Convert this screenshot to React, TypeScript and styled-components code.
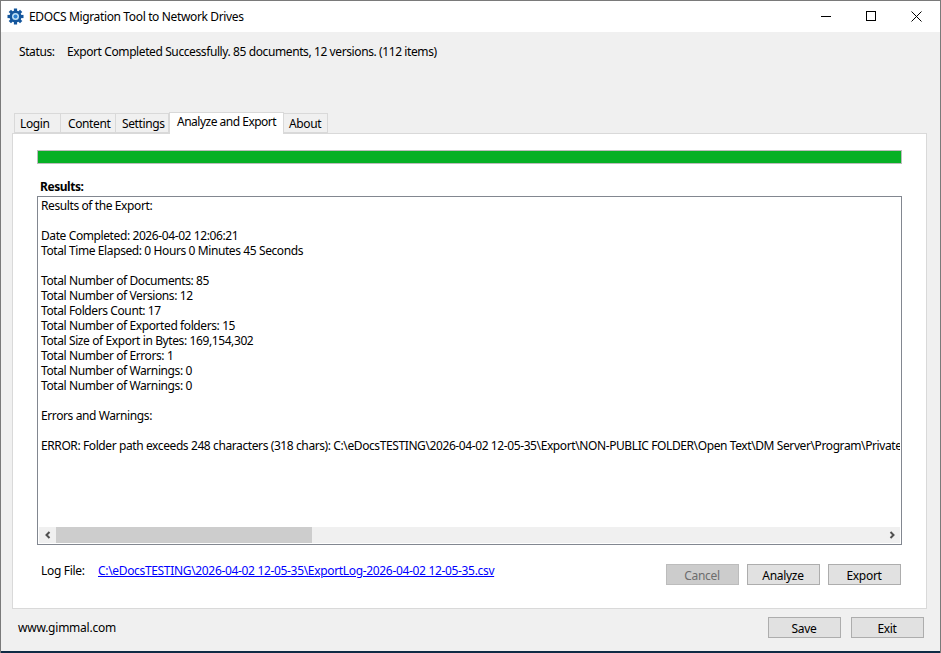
import styled, { createGlobalStyle } from "styled-components";

const GlobalStyle = createGlobalStyle`
    html, body { margin: 0; padding: 0; background: #f0f0f0; }
    body { font-family: "Noto Sans", "Open Sans", sans-serif; font-size: 12px; color: #000; }
`

const Window = styled.div`
    width: 941px;
    height: 653px;
    box-sizing: border-box;
    border: 1px solid #7a7a7a;
    border-bottom: none;
    background: #f0f0f0;
    display: flex;
    flex-direction: column;
    overflow: hidden;
`

const TitleBar = styled.div`
    height: 31px;
    background: white;
    display: flex;
    align-items: center;
    padding: 0 1px 0 6px;
    flex: none;
`
const AppTitle = styled.span`
    margin-left: 5px;
    flex: 1;
    letter-spacing: -0.36px;
`
const WinButton = styled.div`
    width: 45px;
    height: 31px;
    display: flex;
    align-items: center;
    justify-content: center;
`

const StatusRow = styled.div`
    height: 38px;
    padding-left: 18px;
    display: flex;
    align-items: center;
    letter-spacing: -0.4px;
    flex: none;
`
const StatusLabel = styled.span`width: 48px;`

const Tabs = styled.div`
    margin-top: 41px;
    height: 22px;
    padding-left: 13px;
    display: flex;
    align-items: flex-end;
    flex: none;
    position: relative;
    z-index: 1;
`
const Tab = styled.div<{ $w: number; $pad: number; $active?: boolean }>`
    width: ${p => p.$w}px;
    height: ${p => (p.$active ? 22 : 20)}px;
    box-sizing: border-box;
    border: 1px solid #d9d9d9;
    border-left: ${p => (p.$active ? "1px solid #d9d9d9" : "none")};
    border-bottom: ${p => (p.$active ? "none" : "1px solid #d9d9d9")};
    background: ${p => (p.$active ? "white" : "#f0f0f0")};
    padding: ${p => (p.$active ? 1 : 2)}px 0 0 ${p => p.$pad}px;
    margin-bottom: ${p => (p.$active ? -1 : 0)}px;
    letter-spacing: ${p => (p.$active ? -0.5 : -0.38)}px;
    line-height: 16px;
    white-space: nowrap;
    &:first-child { border-left: 1px solid #d9d9d9; }
`

const Panel = styled.div`
    margin-left: 11px;
    width: 915px;
    height: 476px;
    box-sizing: border-box;
    border: 1px solid #d9d9d9;
    background: white;
    padding: 16px 24px 0 24px;
    display: flex;
    flex-direction: column;
    flex: none;
`

const ProgressTrack = styled.div`
    height: 14px;
    box-sizing: border-box;
    border: 1px solid #bcbcbc;
    background: #06b025;
    flex: none;
`
const ResultsLabel = styled.div`
    margin-top: 15px;
    margin-left: 3px;
    height: 17px;
    line-height: 16px;
    font-weight: 700;
    letter-spacing: -0.45px;
`

const ResultsBox = styled.div`
    height: 349px;
    box-sizing: border-box;
    border: 1px solid #828790;
    padding: 1px;
    display: flex;
    flex-direction: column;
    flex: none;
`
const ResultsText = styled.div`
    flex: 1;
    padding: 0 0 0 2px;
    overflow: hidden;
    white-space: pre;
    line-height: 15px;
    letter-spacing: -0.4px;
`
const ScrollBar = styled.div`
    height: 16px;
    background: #f0f0f0;
    display: flex;
    align-items: stretch;
    flex: none;
`
const ScrollArrow = styled.div`
    width: 17px;
    display: flex;
    align-items: center;
    justify-content: center;
    flex: none;
`
const ScrollThumb = styled.div`
    width: 256px;
    background: #cdcdcd;
    flex: none;
`
const ScrollRest = styled.div`flex: 1;`

const LogRow = styled.div`
    margin-top: 19px;
    display: flex;
    align-items: flex-start;
    height: 22px;
    flex: none;
`
const LogLabel = styled.span`
    margin-left: 4px;
    width: 57px;
    line-height: 14px;
    letter-spacing: -0.3px;
`
const LogLink = styled.a`
    flex: 1;
    color: #0000ff;
    text-decoration: underline;
    line-height: 14px;
    letter-spacing: -0.33px;
`
const ButtonGroup = styled.div`
    display: flex;
    gap: 8px;
    margin-right: 1px;
    flex: none;
`
const Button = styled.button<{ $disabled?: boolean }>`
    width: 73px;
    height: 21px;
    box-sizing: border-box;
    padding: 1px 1px 0 0;
    font: inherit;
    letter-spacing: -0.3px;
    border: 1px solid ${p => (p.$disabled ? "#bcbcbc" : "#adadad")};
    background: ${p => (p.$disabled ? "#cccccc" : "#e1e1e1")};
    color: ${p => (p.$disabled ? "#6d6d6d" : "#000")};
`

const Footer = styled.div`
    display: flex;
    align-items: center;
    padding: 8px 16px 0 17px;
    height: 21px;
    flex: none;
`
const Website = styled.span`
    flex: 1;
    letter-spacing: -0.23px;
`
const FooterButtons = styled.div`
    display: flex;
    gap: 10px;
`
const TaskbarEdge = styled.div`
    margin-top: auto;
    height: 2px;
    margin-left: -1px;
    margin-right: -1px;
    background: #0f2b45;
    flex: none;
`

const GearIcon = () => (
    <svg width="17" height="17" viewBox="0 0 17 17">
        <g fill="#14569c">
            {[0, 45, 90, 135, 180, 225, 270, 315].map(a => (
                <rect key={a} x="6.9" y="0.5" width="3.2" height="4" transform={`rotate(${a} 8.5 8.5)`} />
            ))}
        </g>
        <circle cx="8.5" cy="8.5" r="6" fill="#14569c" />
        <circle cx="8.5" cy="8.5" r="3.5" fill="#bfe0f5" />
        <circle cx="8.5" cy="8.5" r="2" fill="#2b7fd0" />
    </svg>
)

const results = `Results of the Export:

Date Completed: 2026-04-02 12:06:21
Total Time Elapsed: 0 Hours 0 Minutes 45 Seconds

Total Number of Documents: 85
Total Number of Versions: 12
Total Folders Count: 17
Total Number of Exported folders: 15
Total Size of Export in Bytes: 169,154,302
Total Number of Errors: 1
Total Number of Warnings: 0
Total Number of Warnings: 0

Errors and Warnings:

ERROR: Folder path exceeds 248 characters (318 chars): C:\\eDocsTESTING\\2026-04-02 12-05-35\\Export\\NON-PUBLIC FOLDER\\Open Text\\DM Server\\Program\\Private\\Templates`

const App = () => {
    return (
        <Window>
            <GlobalStyle />
            <TitleBar>
                <GearIcon />
                <AppTitle>EDOCS Migration Tool to Network Drives</AppTitle>
                <WinButton>
                    <svg width="11" height="11" viewBox="0 0 11 11"><path d="M0 5.5H10" stroke="#000" /></svg>
                </WinButton>
                <WinButton>
                    <svg width="11" height="11" viewBox="0 0 11 11"><rect x="0.5" y="0.5" width="9" height="9" fill="none" stroke="#000" /></svg>
                </WinButton>
                <WinButton>
                    <svg width="11" height="11" viewBox="0 0 11 11"><path d="M0.5 0.5L10.5 10.5M10.5 0.5L0.5 10.5" stroke="#000" /></svg>
                </WinButton>
            </TitleBar>

            <StatusRow>
                <StatusLabel>Status:</StatusLabel>
                <span>Export Completed Successfully. 85 documents, 12 versions. (112 items)</span>
            </StatusRow>

            <Tabs>
                <Tab $w={47} $pad={5}>Login</Tab>
                <Tab $w={55} $pad={7}>Content</Tab>
                <Tab $w={53} $pad={6}>Settings</Tab>
                <Tab $w={115} $pad={7} $active>Analyze and Export</Tab>
                <Tab $w={44} $pad={5}>About</Tab>
            </Tabs>

            <Panel>
                <ProgressTrack />
                <ResultsLabel>Results:</ResultsLabel>
                <ResultsBox>
                    <ResultsText>{results}</ResultsText>
                    <ScrollBar>
                        <ScrollArrow>
                            <svg width="8" height="8" viewBox="0 0 8 8"><path d="M5.5 1L2.5 4L5.5 7" fill="none" stroke="#505050" strokeWidth="2" /></svg>
                        </ScrollArrow>
                        <ScrollThumb />
                        <ScrollRest />
                        <ScrollArrow>
                            <svg width="8" height="8" viewBox="0 0 8 8"><path d="M2.5 1L5.5 4L2.5 7" fill="none" stroke="#505050" strokeWidth="2" /></svg>
                        </ScrollArrow>
                    </ScrollBar>
                </ResultsBox>
                <LogRow>
                    <LogLabel>Log File:</LogLabel>
                    <LogLink href="#">C:\eDocsTESTING\2026-04-02 12-05-35\ExportLog-2026-04-02 12-05-35.csv</LogLink>
                    <ButtonGroup>
                        <Button $disabled>Cancel</Button>
                        <Button>Analyze</Button>
                        <Button>Export</Button>
                    </ButtonGroup>
                </LogRow>
            </Panel>

            <Footer>
                <Website>www.gimmal.com</Website>
                <FooterButtons>
                    <Button>Save</Button>
                    <Button>Exit</Button>
                </FooterButtons>
            </Footer>
            <TaskbarEdge />
        </Window>
    );
}

export default App;
